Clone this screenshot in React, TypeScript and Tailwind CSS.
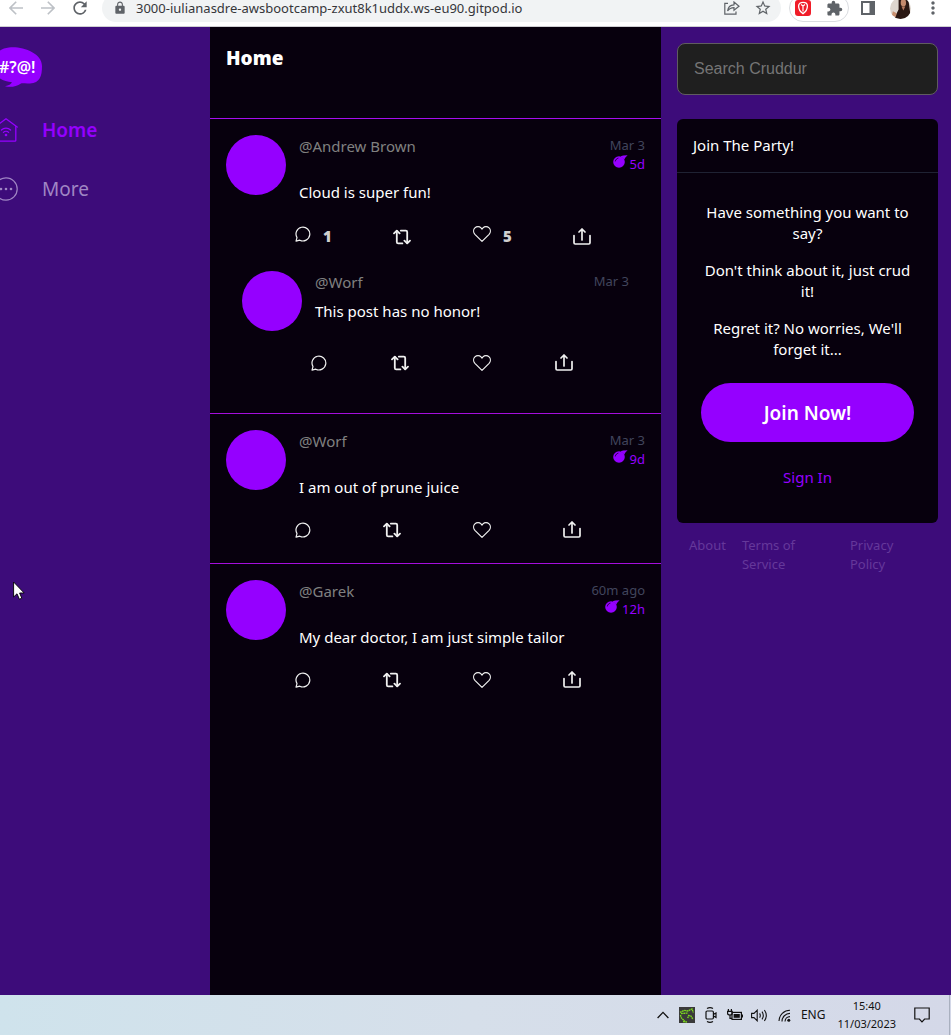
import React from "react";
import { MdLock, MdStarOutline, MdExtension, MdRefresh, MdMoreVert } from "react-icons/md";

type Svg = { className?: string };

const ChatIcon = ({ className }: Svg) => (
  <svg viewBox="0 0 16 16" className={className} fill="none" stroke="currentColor" strokeWidth="1.2" strokeLinejoin="round">
    <path d="M1 15.2 L2 11.6 A6.9 6.9 0 1 1 4.8 14.2 Z" />
  </svg>
);

const RepostIcon = ({ className }: Svg) => (
  <svg viewBox="0 0 18 16" className={className} fill="none" stroke="currentColor" strokeWidth="1.8" strokeLinecap="round" strokeLinejoin="round">
    <path d="M1 4.4 L3.8 1.6 L6.6 4.4" />
    <path d="M3.8 2 V13 Q3.8 14.4 5.2 14.4 H9.4" />
    <path d="M7.8 1.6 H12.8 Q14.2 1.6 14.2 3 V14" />
    <path d="M11.4 11.6 L14.2 14.4 L17 11.6" />
  </svg>
);

const HeartIcon = ({ className }: Svg) => (
  <svg viewBox="0 0 18 16" className={className} fill="none" stroke="currentColor" strokeWidth="1.2" strokeLinejoin="round">
    <path d="M9 15.4 L1.9 8.3 C0.2 6.4 0.2 3.6 1.9 1.9 C3.7 0.2 6.4 0.2 8 1.9 L9 3 L10 1.9 C11.6 0.2 14.3 0.2 16.1 1.9 C17.8 3.6 17.8 6.4 16.1 8.3 Z" />
  </svg>
);

const ShareIcon = ({ className }: Svg) => (
  <svg viewBox="0 0 18 17" className={className} fill="none" stroke="currentColor" strokeWidth="1.7" strokeLinecap="round" strokeLinejoin="round">
    <path d="M1 7.6 V14.8 Q1 16 2.2 16 H15.8 Q17 16 17 14.8 V7.6" />
    <path d="M9 12 V1.6" />
    <path d="M6 4 L9 1 L12 4" />
  </svg>
);

const BombIcon = ({ className }: Svg) => (
  <svg viewBox="0 0 15 13" className={className}>
    <circle cx="6" cy="7" r="5.8" fill="#9500ff" />
    <path d="M7.6 1.2 L10.2 0.4 L14.6 0.2 L12.6 2.2 L11.2 4.6 Z" fill="#9500ff" />
    <path d="M2.3 6.4 C2.6 4.6 3.8 3.5 5.4 3.1" stroke="#07000d" strokeWidth="0.8" fill="none" />
  </svg>
);

const Logo = ({ className }: Svg) => (
  <svg viewBox="0 0 48 40" className={className} role="img" aria-label="Cruddur">
    <path d="M15 0.6 C28 -1 48 6 48 19 C48 29 46 36 36 36.4 C32 36.6 29 36.2 27 36.4 C22 40 16 40.4 11 39.2 C15 38.4 17 37 18 35.2 C9 34.4 0 31 0 19 C0 7 5 1.6 15 0.6 Z" fill="#9500ff" />
    <text x="5" y="26" fontFamily="'Noto Sans', sans-serif" fontSize="16" fontWeight="600" fill="#fff">#?@!</text>
  </svg>
);

const HomeIcon = ({ className }: Svg) => (
  <svg viewBox="0 0 24 24" className={className} fill="none" stroke="currentColor" strokeWidth="1.3" strokeLinecap="round" strokeLinejoin="round">
    <path d="M0.8 9 L12 0.8 L23.2 9" />
    <path d="M2.2 8.4 V22.4 Q2.2 23.2 3 23.2 H21 Q21.8 23.2 21.8 22.4 V8.4" />
    <path d="M7.4 12 C10 9.6 14 9.6 16.6 12" />
    <path d="M9.4 14.4 C10.8 13 13.2 13 14.6 14.4" />
    <circle cx="12" cy="17" r="0.7" fill="currentColor" />
  </svg>
);

const MoreIcon = ({ className }: Svg) => (
  <svg viewBox="0 0 24 24" className={className} fill="none" stroke="currentColor" strokeWidth="1.2">
    <circle cx="12" cy="12" r="11.2" />
    <g fill="currentColor" stroke="none">
      <circle cx="7" cy="12" r="1.3" />
      <circle cx="12" cy="12" r="1.3" />
      <circle cx="17" cy="12" r="1.3" />
    </g>
  </svg>
);

const ArrowIcon = ({ className }: Svg) => (
  <svg viewBox="0 0 14 14" className={className} fill="none" stroke="currentColor" strokeWidth="1.6">
    <path d="M14 7 H1.2 M7.2 0.8 L1 7 L7.2 13.2" />
  </svg>
);

function BrowserBar() {
  return (
    <header className="flex h-[27px] shrink-0 items-end border-b border-[#cfcfd2] bg-white text-[#5f6368]">
      <div className="mb-1 flex h-7 w-full items-center">
        <button aria-label="Back" className="ml-[9px] text-[#bdc1c6]"><ArrowIcon className="size-[14px]" /></button>
        <button aria-label="Forward" className="ml-[18px] rotate-180 text-[#bdc1c6]"><ArrowIcon className="size-[14px]" /></button>
        <button aria-label="Reload" className="ml-[15px]"><MdRefresh className="size-5" /></button>
        <div className="ml-3 flex h-7 min-w-0 flex-1 items-center rounded-full bg-[#f1f3f4] pr-[9px] pl-[11px]">
          <MdLock className="size-3.5 shrink-0" />
          <span className="ml-[9px] min-w-0 flex-1 font-['Noto_Sans',sans-serif] text-[13px] leading-4 whitespace-nowrap text-[#35363a]">
            3000-iulianasdre-awsbootcamp-zxut8k1uddx.ws-eu90.gitpod.io
          </span>
          <button aria-label="Share page">
            <svg viewBox="0 0 16 14" className="h-[14px] w-4" fill="none" stroke="currentColor" strokeWidth="1.2">
              <path d="M4 2.4 H0.8 V13.2 H12 V10.4" />
              <path d="M3.6 10 C4 6 6.4 4 10 3.8 V1 L15 5.2 L10 9.2 V6.6 C7 6.6 5.2 7.6 3.6 10 Z" />
            </svg>
          </button>
          <button aria-label="Bookmark" className="ml-3.5"><MdStarOutline className="size-[18px]" /></button>
        </div>
        <div className="ml-2 flex h-7 w-[60px] items-center justify-between rounded-full border border-[#dadce0] px-[5px]">
          <svg viewBox="0 0 16 16" className="size-4" aria-hidden="true">
            <rect width="16" height="16" rx="3" fill="#f01c28" />
            <path d="M8 2.4 C10.4 2.4 12.4 3.6 12.4 6 C12.4 9.4 10.4 12 8 13.6 C5.6 12 3.6 9.4 3.6 6 C3.6 3.6 5.6 2.4 8 2.4 Z" fill="none" stroke="#fff" strokeWidth="1.3" />
            <path d="M6 4.6 L8 6 L10 4.6 M8 6 V11.4" fill="none" stroke="#fff" strokeWidth="1.2" />
          </svg>
          <MdExtension className="size-[17px]" />
        </div>
        <button aria-label="Side panel" className="ml-3">
          <svg viewBox="0 0 14 14" className="size-3.5"><path d="M0 0 H14 V14 H0 Z M2 2 V12 H8.5 V2 Z" fill="currentColor" fillRule="evenodd" /></svg>
        </button>
        <button aria-label="Profile" className="ml-[15px]">
          <svg viewBox="0 0 22 22" className="size-[21px]">
            <clipPath id="face"><circle cx="11" cy="11" r="11" /></clipPath>
            <g clipPath="url(#face)">
              <rect width="22" height="22" fill="#ded6ce" />
              <path d="M9 0 H19 L22 22 H4 L9 12 Z" fill="#2a1712" />
              <ellipse cx="14" cy="5" rx="2.8" ry="4" fill="#c48a6c" />
              <path d="M3 14 L7 16 L6 20 L2 18 Z" fill="#c98f6f" />
              <path d="M12 9 L14 13 L16 9 Z" fill="#b67a5e" />
            </g>
          </svg>
        </button>
        <button aria-label="Menu" className="mr-2 ml-3"><MdMoreVert className="size-5" /></button>
      </div>
    </header>
  );
}

function Sidebar() {
  return (
    <nav className="w-[210px] shrink-0 overflow-hidden pt-5">
      <div className="-ml-[6px] flex flex-col">
        <Logo className="h-10 w-12" />
        <a href="#home" className="mt-[29px] flex h-7 items-center gap-6 text-[19px] font-semibold text-[#9500ff]">
          <HomeIcon className="size-6" />
          Home
        </a>
        <a href="#more" className="mt-[31px] flex h-7 items-center gap-6 text-[19px] text-[#a086c4]">
          <MoreIcon className="size-6" />
          More
        </a>
      </div>
    </nav>
  );
}

type Post = {
  handle: string;
  message: string;
  time: string;
  expires?: string;
  replies?: number;
  likes?: number;
  children?: Post[];
};

const posts: Post[] = [
  {
    handle: "@Andrew Brown",
    message: "Cloud is super fun!",
    time: "Mar 3",
    expires: "5d",
    replies: 1,
    likes: 5,
    children: [{ handle: "@Worf", message: "This post has no honor!", time: "Mar 3" }],
  },
  { handle: "@Worf", message: "I am out of prune juice", time: "Mar 3", expires: "9d" },
  { handle: "@Garek", message: "My dear doctor, I am just simple tailor", time: "60m ago", expires: "12h" },
];

function Action({ label, count, children }: { label: string; count?: number; children: React.ReactNode }) {
  return (
    <button aria-label={label} className="flex flex-auto items-start gap-3 p-2 text-[#f0f0f0]">
      {children}
      {count !== undefined && <span className="text-[15px] leading-[21px] font-black text-[#cfcfcf]">{count}</span>}
    </button>
  );
}

function Activity({ post }: { post: Post }) {
  return (
    <article className="px-4 pt-4 pb-[17px]">
      <div className="flex gap-[13px]">
        <div className="size-[60px] shrink-0 rounded-full bg-[#9500ff]" />
        <div className="min-w-0 flex-1">
          <div className="mb-2 flex justify-between pt-px">
            <a href="#profile" className="text-[15px] leading-[21px] text-[#808080]">{post.handle}</a>
            <div className="text-right text-[13px] leading-[19px]">
              <div className="text-[#41455c]">{post.time}</div>
              {post.expires && (
                <div className="flex items-start justify-end gap-0.5 text-[#9500ff]">
                  <BombIcon className="h-[13px] w-[15px]" />
                  {post.expires}
                </div>
              )}
            </div>
          </div>
          <p className="text-[15px] leading-[21px] text-white">{post.message}</p>
        </div>
      </div>
      <div className="mt-[15px] ml-[61px] flex items-center">
        <Action label="Reply" count={post.replies}><ChatIcon className="size-4" /></Action>
        <Action label="Repost"><RepostIcon className="h-4 w-[18px]" /></Action>
        <Action label="Like" count={post.likes}><HeartIcon className="h-4 w-[18px]" /></Action>
        <Action label="Share"><ShareIcon className="h-[17px] w-[18px]" /></Action>
      </div>
      {post.children?.map((reply) => <Activity key={reply.handle} post={reply} />)}
    </article>
  );
}

function JoinPanel() {
  return (
    <section className="mt-6 rounded-md bg-[#07000d] text-[15px] leading-[21px] text-white">
      <h2 className="border-b border-[#1f2233] p-4">Join The Party!</h2>
      <div className="flex flex-col px-6 pt-[29px] pb-[35px] text-center">
        <div className="flex flex-col gap-4">
          <p>Have something you want to say?</p>
          <p>Don't think about it, just crud it!</p>
          <p>Regret it? No worries, We'll forget it...</p>
        </div>
        <button className="mt-[23px] h-[59px] rounded-full bg-[#9500ff] pt-0.5 text-[19px] font-semibold">Join Now!</button>
        <a href="#signin" className="mt-[25px] text-[#9500ff]">Sign In</a>
      </div>
    </section>
  );
}

function Rightbar() {
  return (
    <aside className="w-[290px] shrink-0 pt-4 pr-[13px] pl-4">
      <input
        type="text"
        aria-label="Search Cruddur"
        placeholder="Search Cruddur"
        className="h-[52px] w-full rounded-lg border border-[#605c60] bg-[#1f1f1f] px-4 font-['Liberation_Sans',sans-serif] text-base text-white outline-none placeholder:text-[#757575]"
      />
      <JoinPanel />
      <footer className="flex gap-4 px-3 pt-[13px] text-[13px] leading-[19px] text-[#65389a]">
        <a href="#about">About</a>
        <a href="#terms" className="w-[92px]">Terms of<br />Service</a>
        <a href="#privacy">Privacy<br />Policy</a>
      </footer>
    </aside>
  );
}

function Taskbar() {
  return (
    <footer className="flex h-10 shrink-0 items-center justify-end bg-linear-to-r from-[#cfe3ec] via-[#d6dfea] to-[#d4d8e8] text-[#111]">
      <button aria-label="Show hidden icons">
        <svg viewBox="0 0 12 8" className="h-2 w-3" fill="none" stroke="currentColor" strokeWidth="1.3"><path d="M0.6 7 L6 1.4 L11.4 7" /></svg>
      </button>
      <svg viewBox="0 0 16 16" className="ml-2.5 size-4" aria-hidden="true">
        <rect width="16" height="16" fill="#3a3a3a" />
        <path d="M1 5.4 L5 3.4 L9 4 L13 2 L14.4 5.4 M2 6.6 L9 6 M1.4 8 L2.4 11 L6 14.4 M9 8.4 L12 9 L14 12.4 M9.4 9.6 L8.6 11 M4 14.6 L8 15" fill="none" stroke="#7ddc1e" strokeWidth="1.3" strokeDasharray="1.8 0.5" />
      </svg>
      <svg viewBox="0 0 12 16" className="ml-2.5 h-4 w-3" fill="none" stroke="currentColor" strokeWidth="1.2" aria-hidden="true">
        <path d="M2 1.6 Q5 -0.2 8 1.6 M2 14.4 Q5 16.2 8 14.4" />
        <rect x="1" y="4" width="7.4" height="8" rx="1.2" />
        <path d="M8.4 7.4 L11 6 V10.4 L8.4 9" />
      </svg>
      <svg viewBox="0 0 16 12" className="ml-2.5 h-3 w-4" fill="none" stroke="currentColor" strokeWidth="1.2" aria-hidden="true">
        <path d="M1.4 0 V2 M4.4 0 V2 M0.6 2.4 H5.2 V4.6 Q5.2 6 3 6 Q0.6 6 0.6 4.6 Z M3 6 V9.4 H5" />
        <rect x="5" y="3.4" width="9.4" height="7" />
        <rect x="6.6" y="5" width="6.2" height="3.8" fill="currentColor" stroke="none" />
        <path d="M15.4 5.6 V8.4" />
      </svg>
      <svg viewBox="0 0 17 13" className="ml-2 h-[13px] w-[17px]" fill="none" stroke="currentColor" strokeWidth="1.1" aria-hidden="true">
        <path d="M0.6 4.4 H3 L6.2 1.2 V11.8 L3 8.6 H0.6 Z" />
        <path d="M8.6 4.4 Q10 6.5 8.6 8.6 M11 2.6 Q13.6 6.5 11 10.4 M13.4 1 Q17.2 6.5 13.4 12" />
      </svg>
      <svg viewBox="0 0 13 13" className="ml-2.5 size-[13px]" fill="none" stroke="currentColor" strokeWidth="1.1" aria-hidden="true">
        <path d="M1 12 A11 11 0 0 1 12 1.2 M4 12.4 A8 8 0 0 1 12 4.4 M7 12.4 A5 5 0 0 1 12 7.6" />
        <circle cx="10.8" cy="11.2" r="1.5" fill="currentColor" stroke="none" />
      </svg>
      <span className="ml-2.5 text-xs">ENG</span>
      <div className="ml-3 flex flex-col text-center text-[11px] leading-[18px]">
        <span>15:40</span>
        <span>11/03/2023</span>
      </div>
      <button aria-label="Notifications" className="ml-[18px]">
        <svg viewBox="0 0 16 16" className="size-4" fill="none" stroke="currentColor" strokeWidth="1.2"><path d="M0.8 1 H15.2 V12 H10.6 L8 14.8 L5.4 12 H0.8 Z" /></svg>
      </button>
      <div className="mr-px ml-[19px] h-10 w-px bg-[#a9b0bf]" />
    </footer>
  );
}

export default function App() {
  return (
    <div className="relative flex min-h-screen flex-col font-['Noto_Sans',sans-serif]">
      <BrowserBar />
      <div className="flex flex-1 bg-[#3d0c7a]">
        <Sidebar />
        <main className="min-w-0 flex-1 bg-[#07000d]">
          <div className="h-[92px] border-b border-[#a50eee] p-4">
            <h1 className="text-[19px] leading-[30px] font-black text-white">Home</h1>
          </div>
          {posts.map((post, i) => (
            <div key={post.message} className={i < posts.length - 1 ? "border-b border-[#a50edc]" : ""}>
              <Activity post={post} />
            </div>
          ))}
        </main>
        <Rightbar />
      </div>
      <Taskbar />
      <svg viewBox="0 0 12 19" className="pointer-events-none absolute top-[581px] left-[13px] h-[19px] w-3" aria-hidden="true">
        <path d="M0.6 1 V16 L4 12.8 L6.4 18.2 L8.8 17.2 L6.6 12 H11.2 Z" fill="#fff" stroke="#000" strokeWidth="0.9" />
      </svg>
    </div>
  );
}
